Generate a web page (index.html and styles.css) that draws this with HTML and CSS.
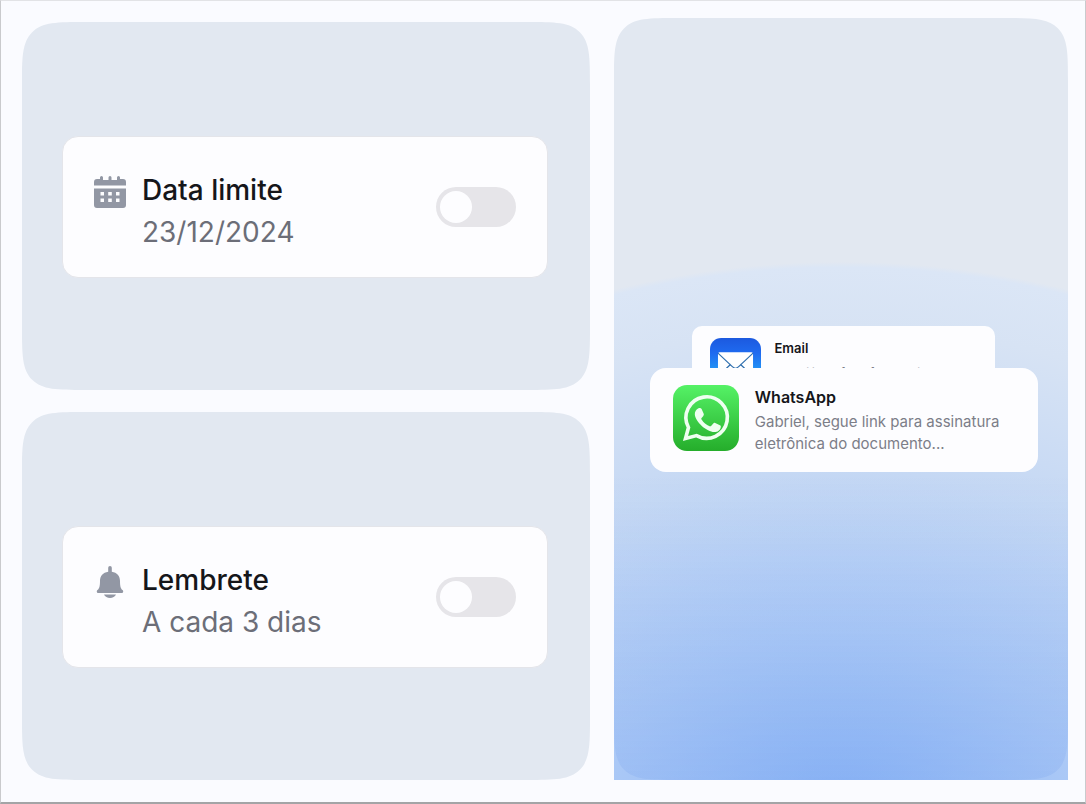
FILE: index.html
```
<!DOCTYPE html>
<html lang="pt-BR">
<head>
    <meta charset="UTF-8">
    <meta name="viewport" content="width=device-width, initial-scale=1.0">
    <title>Lembretes</title>
    <link rel="stylesheet" href="styles.css">
</head>
<body>

    <main class="board">
        <div class="settings">
            <section class="panel">
                <div class="setting-card">
                    <svg class="setting-icon" viewBox="0 0 32 32" aria-hidden="true">
                        <path d="M6 4V1.500a1.500 1.500 0 0 1 3 0V4h5.500V1.500a1.500 1.500 0 0 1 3 0V4H23V1.500a1.500 1.500 0 0 1 3 0V3h3a3 3 0 0 1 3 3v3.500H0V6a3 3 0 0 1 3-3h3z"/>
                        <path fill-rule="evenodd" d="M0 12.500h32V29a3 3 0 0 1-3 3H3a3 3 0 0 1-3-3zM6.500 16v3.500H10V16zM14.200 16v3.500h3.600V16zM22 16v3.500h3.500V16zM6.500 22.500V26H10v-3.500zM14.200 22.500V26h3.600v-3.500zM22 22.500V26h3.500v-3.500z"/>
                    </svg>
                    <div class="setting-text">
                        <label for="deadline">Data limite</label>
                        <p>23/12/2024</p>
                    </div>
                    <input class="toggle" type="checkbox" id="deadline">
                </div>
            </section>

            <section class="panel">
                <div class="setting-card">
                    <svg class="setting-icon" viewBox="0 0 32 32" aria-hidden="true">
                        <path d="M14.200 1.800a1.800 1.800 0 0 1 3.600 0v4C23 6.500 26 10 26 15c0 6 1 8 2.800 9.300.8.700.5 2.700-.8 2.700H4c-1.300 0-1.600-2-.8-2.700C5 23 6 21 6 15c0-5 3-8.500 8.200-9.200z"/>
                        <path d="M10 28.500h12c-1 2.200-3.300 3.500-6 3.500s-5-1.300-6-3.500z"/>
                    </svg>
                    <div class="setting-text">
                        <label for="reminder">Lembrete</label>
                        <p>A cada 3 dias</p>
                    </div>
                    <input class="toggle" type="checkbox" id="reminder">
                </div>
            </section>
        </div>

        <section class="channels">
            <div class="stack">
                <article class="notice notice-back">
                    <svg class="app-icon" viewBox="0 0 64 64" aria-hidden="true">
                        <defs>
                            <linearGradient id="mailBg" x1="0" y1="0" x2="0" y2="1">
                                <stop offset="0" stop-color="#1c59df"/>
                                <stop offset="0.300" stop-color="#1f6bf0"/>
                                <stop offset="1" stop-color="#26c3fb"/>
                            </linearGradient>
                        </defs>
                        <rect width="64" height="64" rx="14" fill="url(#mailBg)"/>
                        <rect x="10" y="18" width="44" height="31" rx="2" fill="#fff"/>
                        <path d="M10 19l18 17c2.500 2.500 5.500 2.500 8 0l18-17M10 48l16-15M54 48L38 33" fill="none" stroke="#2f6fae" stroke-width="1.500"/>
                    </svg>
                    <div class="notice-text">
                        <h2>Email</h2>
                        <p>Tudo já confere, falta assinar</p>
                    </div>
                </article>

                <article class="notice notice-front">
                    <svg class="app-icon" viewBox="0 0 66 66" aria-hidden="true">
                        <defs>
                            <linearGradient id="waBg" x1="0" y1="0" x2="0" y2="1">
                                <stop offset="0" stop-color="#55f266"/>
                                <stop offset="1" stop-color="#25ad2b"/>
                            </linearGradient>
                        </defs>
                        <rect width="66" height="66" rx="14" fill="url(#waBg)"/>
                        <path d="M12.500 53.500l3-11A20.700 20.700 0 1 1 23.500 50.600z" fill="none" stroke="#effff1" stroke-width="3.600" stroke-linejoin="miter"/>
                        <path d="M25.500 23.300c.9-.5 2.500-.5 3.100.6l2.100 4.900c.3.800.1 1.400-.4 2.100l-1.700 2c-.5.600-.4 1 0 1.600 1.900 3.100 4.600 5.300 8 6.700.7.300 1.200.2 1.700-.4l2-2.400c.5-.7 1.100-.8 1.900-.5l4.700 2.300c.9.500 1 .8.900 1.700-.4 3.500-3.600 5.400-6.800 5.200-3-.2-8.700-2.700-12.200-6.100-3.600-3.500-6.800-8-7-11.700-.1-2.500 1.400-4.900 3.700-6z" fill="#effff1"/>
                    </svg>
                    <div class="notice-text">
                        <h2>WhatsApp</h2>
                        <p>Gabriel, segue link para assinatura eletrônica do documento...</p>
                    </div>
                </article>
            </div>
        </section>
    </main>

</body>
</html>
```

FILE: styles.css
```
* {
    margin: 0;
    padding: 0;
    box-sizing: border-box;
}

body {
    font-family: Inter, "Liberation Sans", sans-serif;
    background: #fafbff;
    color: #15161a;
}

.board {
    display: grid;
    grid-template-columns: 5fr 4fr;
    gap: 24px;
    min-height: 100vh;
    padding: 17px 17px 22px 21px;
    border: 1px solid #c9cacd;
    border-top-color: #e2e3e6;
    border-bottom: 2px solid #a3a4a6;
}

.settings {
    display: grid;
    grid-template-rows: 1fr 1fr;
    gap: 22px;
    padding-top: 4px;
}

.panel {
    display: flex;
    align-items: center;
    justify-content: center;
    padding: 2px 42px 0 40px;
    background: #e2e8f1;
    border-radius: 44px;
}

.setting-card {
    display: flex;
    align-items: flex-start;
    width: 100%;
    padding: 32px 31px 24px;
    background: #fdfdff;
    border: 1px solid #e4e5ea;
    border-radius: 16px;
}

.setting-icon {
    width: 32px;
    height: 32px;
    margin: 7px 16px 0 0;
    fill: #9297a4;
}

.setting-text {
    flex: 1;
    font-size: 28px;
    line-height: 42px;
}

.setting-text label {
    font-weight: 500;
}

.setting-text p {
    color: #6c6e78;
}

.toggle {
    appearance: none;
    width: 80px;
    height: 40px;
    margin-top: 18px;
    padding: 4px;
    background: #e6e5e9;
    border-radius: 20px;
    cursor: pointer;
}

.toggle::before {
    content: "";
    display: block;
    width: 32px;
    height: 32px;
    background: #fdfdff;
    border-radius: 50%;
    transition: 0.3s;
}

.toggle:checked {
    background: #34c759;
}

.toggle:checked::before {
    transform: translateX(40px);
}

/* The glow is square at the bottom, the panel inside it is rounded */
.channels {
    display: grid;
    background: radial-gradient(160% 72% at 50% 104%, #8ab4f6 0%, #aac8f6 32%, #c5d8f4 62%, #d7e3f4 88%, #dbe6f6 99%, #e2e8f1 100%);
    border-radius: 44px 44px 0 0;
}

.stack {
    display: flex;
    flex-direction: column;
    align-items: center;
    justify-content: center;
    padding: 0 30px 0 36px;
    background: linear-gradient(rgba(120, 160, 230, 0) 60%, rgba(110, 155, 235, 0.2));
    border-radius: 44px;
}

.notice {
    display: flex;
    background: #fdfdff;
}

/* Tucked behind the front card, only its top is visible */
.notice-back {
    width: 78%;
    height: 82px;
    margin-bottom: -40px;
    padding: 12px 18px 0;
    gap: 13px;
    border-radius: 10px;
}

.notice-front {
    position: relative;
    width: 100%;
    padding: 17px 23px;
    gap: 16px;
    border-radius: 16px;
}

.app-icon {
    flex-shrink: 0;
    width: 66px;
    height: 66px;
}

.notice-back .app-icon {
    width: 51px;
    height: 51px;
}

.notice h2 {
    font-size: 16px;
    font-weight: 600;
    line-height: 24px;
}

.notice p {
    margin-top: 2px;
    font-size: 15px;
    line-height: 22px;
    color: #7c7e88;
}

.notice-back h2 {
    font-size: 13px;
    line-height: 20px;
}

.notice-back p {
    margin-top: 4px;
    font-size: 12px;
    line-height: 22px;
    white-space: nowrap;
}

@supports (corner-shape: squircle) {
    .panel,
    .stack {
        border-radius: 64px;
        corner-shape: squircle;
    }

    .channels {
        border-radius: 64px 64px 0 0;
        corner-shape: squircle;
    }
}
```
